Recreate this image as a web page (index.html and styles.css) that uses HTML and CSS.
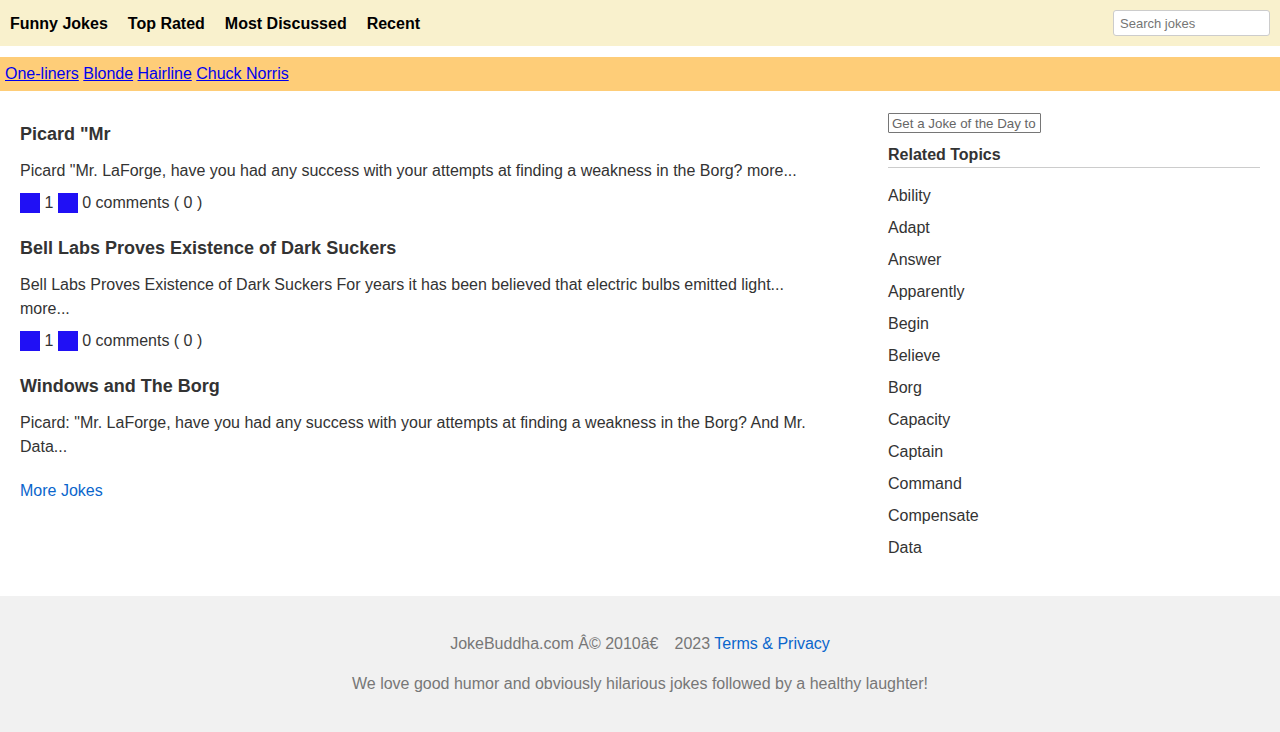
FILE: index.html
```html
<!DOCTYPE html>
<html lang="en">
<head>
<meta charset="utf-8">
<title>JokeBuddha - Funny Jokes</title>
<link rel="stylesheet" href="styles.css">
</head>
<body>
<header class="topnav">
  <nav class="topnav-links">
    <a href="#">Funny Jokes</a>
    <a href="#">Top Rated</a>
    <a href="#">Most Discussed</a>
    <a href="#">Recent</a>
  </nav>
  <input class="search" type="text" placeholder="Search jokes">
</header>
<div class="catbar"><a href="#">One-liners</a> <a href="#">Blonde</a> <a href="#">Hairline</a> <a href="#">Chuck Norris</a></div>
<div class="layout">
  <main class="jokes">
    <article class="joke">
      <h3 class="joke-title">Picard "Mr</h3>
      <p class="joke-body">Picard "Mr. LaForge, have you had any success with your attempts at finding a weakness in the Borg? more...</p>
      <div class="joke-meta"><span class="vote"></span> 1 <span class="vote"></span> 0 comments ( 0 )</div>
    </article>
    <article class="joke">
      <h3 class="joke-title">Bell Labs Proves Existence of Dark Suckers</h3>
      <p class="joke-body">Bell Labs Proves Existence of Dark Suckers For years it has been believed that electric bulbs emitted light... more...</p>
      <div class="joke-meta"><span class="vote"></span> 1 <span class="vote"></span> 0 comments ( 0 )</div>
    </article>
    <article class="joke">
      <h3 class="joke-title">Windows and The Borg</h3>
      <p class="joke-body">Picard: "Mr. LaForge, have you had any success with your attempts at finding a weakness in the Borg? And Mr. Data...</p>
    </article>
    <a class="more" href="#">More Jokes</a>
  </main>
  <aside class="sidebar">
    <input class="jod" type="text" placeholder="Get a Joke of the Day to your inbox">
    <h4 class="side-title">Related Topics</h4>
    <ul class="topics">
      <li>Ability</li>
      <li>Adapt</li>
      <li>Answer</li>
      <li>Apparently</li>
      <li>Begin</li>
      <li>Believe</li>
      <li>Borg</li>
      <li>Capacity</li>
      <li>Captain</li>
      <li>Command</li>
      <li>Compensate</li>
      <li>Data</li>
    </ul>
  </aside>
</div>
<footer class="footer">
  <p>JokeBuddha.com Â© 2010â€<span class="gap"></span>2023 <a href="#">Terms &amp; Privacy</a></p>
  <p>We love good humor and obviously hilarious jokes followed by a healthy laughter!</p>
</footer>
</body>
</html>
```

FILE: styles.css
```css
html, body {
  margin: 0;
  padding: 0;
}
body {
  font-family: "Liberation Sans", Arial, sans-serif;
  font-size: 16px;
  color: #333;
  background: #fff;
}
.topnav {
  display: flex;
  align-items: center;
  justify-content: space-between;
  background: #f9f1cd;
  height: 46px;
  padding: 0 10px 0 10px;
  box-sizing: border-box;
}
.topnav-links {
  display: flex;
  gap: 20px;
  padding-top: 1px;
}
.topnav-links a {
  color: #000;
  font-weight: bold;
  text-decoration: none;
  font-size: 16px;
}
.search {
  width: 157px;
  height: 26px;
  box-sizing: border-box;
  border: 1px solid #ccc;
  border-radius: 3px;
  padding: 0 6px;
  font-family: "Liberation Sans", Arial, sans-serif;
  font-size: 13px;
  background: #fff;
}
.search::placeholder { color: #757575; }
.catbar {
  margin-top: 11px;
  background: #fecd78;
  padding: 5px;
  line-height: 24px;
}
.catbar a { color: #0000ee; }
.layout {
  display: grid;
  grid-template-columns: 1fr 372px;
  gap: 60px;
  padding: 20px 20px 32px;
}
.jokes {
  min-width: 0;
  display: flex;
  flex-direction: column;
  align-items: flex-start;
}
.joke { margin-bottom: 10px; }
.joke-title {
  font-size: 18px;
  font-weight: bold;
  line-height: 24px;
  margin: 11px 0 13px;
  color: #333;
}
.joke-body {
  margin: 0 0 8px;
  line-height: 24px;
}
.joke-meta {
  line-height: 24px;
}
.vote {
  display: inline-block;
  width: 20px;
  height: 20px;
  background: #2010f5;
  vertical-align: -5px;
}
.more {
  display: block;
  margin-top: 2px;
  line-height: 24px;
  color: #0a66cc;
  text-decoration: none;
}
.sidebar { padding-top: 2px; }
.jod {
  display: block;
  width: 153px;
  height: 20px;
  box-sizing: border-box;
  border: 1px solid #767676;
  border-radius: 1px;
  padding: 1px 3px;
  font-family: "Liberation Sans", Arial, sans-serif;
  font-size: 13.333px;
  margin: 0;
}
.jod::placeholder { color: #666; }
.side-title {
  font-size: 16px;
  font-weight: bold;
  margin: 13px 0 0;
  line-height: 18px;
  padding-bottom: 3px;
  border-bottom: 1px solid #ccc;
}
.topics {
  list-style: none;
  margin: 12px 0 0;
  padding: 0;
}
.topics li {
  line-height: 32px;
}
.footer {
  background: #f1f1f1;
  color: #777;
  text-align: center;
  padding: 20px 20px 20px;
}
.footer p {
  margin: 16px 0;
  line-height: 24px;
}
.footer a {
  color: #0a66cc;
  text-decoration: none;
}
.gap {
  display: inline-block;
  width: 16px;
}
```
